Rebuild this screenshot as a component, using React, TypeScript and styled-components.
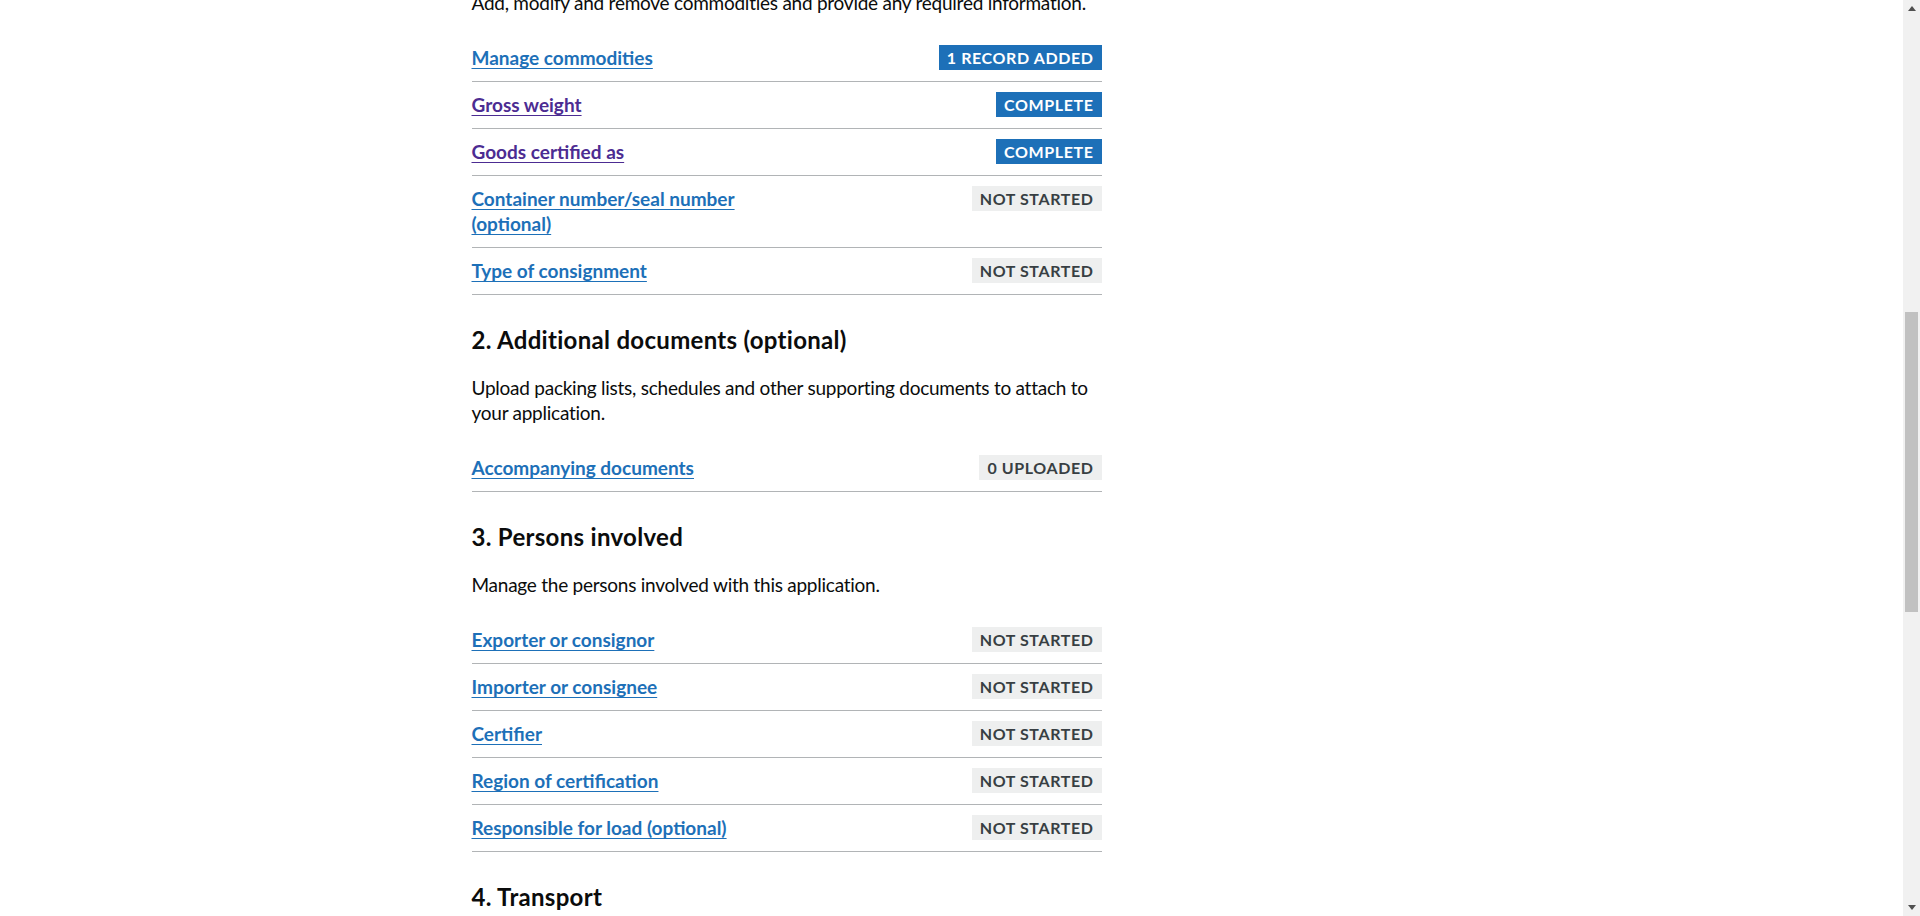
import styled, { createGlobalStyle } from 'styled-components';

const GlobalStyle = createGlobalStyle`
  html, body {
    margin: 0;
    padding: 0;
    height: 100%;
    overflow: hidden;
    background: #ffffff;
  }
  body {
    font-family: Lato, "Liberation Sans", Arial, sans-serif;
    color: #0b0c0c;
    -webkit-font-smoothing: antialiased;
  }
`;

const Screen = styled.div`
  display: flex;
  height: 100vh;
`;

const Viewport = styled.div`
  flex: 1;
  overflow: hidden;
`;

/* the page is scrolled down a little, so the first line sits partly above the fold */
const WidthContainer = styled.main`
  max-width: 960px;
  margin: -10px auto 0;
`;

const Column = styled.div`
  width: 630px;
`;

const Section = styled.section``;

const SectionHeading = styled.h2`
  margin: 0 0 20px;
  font-size: 24px;
  line-height: 30px;
  font-weight: 700;
  letter-spacing: 0.3px;
`;

const Body = styled.p`
  margin: 0 0 20px;
  font-size: 19px;
  line-height: 25px;
  letter-spacing: -0.25px;
`;

const TaskList = styled.ul`
  list-style: none;
  margin: 0 0 30px;
  padding: 0;
`;

const TaskItem = styled.li`
  display: flex;
  justify-content: space-between;
  align-items: flex-start;
  padding: 10px 0 11px;
  border-bottom: 1px solid #b1b4b6;
  font-size: 19px;
  line-height: 25px;
`;

const TaskLink = styled.a<{ $visited?: boolean }>`
  max-width: 50%;
  color: ${(p) => (p.$visited ? '#4c2c92' : '#1d70b8')};
  font-weight: 700;
  text-decoration: underline;
  text-decoration-thickness: 1px;
  text-underline-offset: 0.1578em;
`;

const Tag = styled.strong<{ $tone: 'blue' | 'grey' }>`
  flex-shrink: 0;
  display: inline-block;
  padding: 5px 8px 4px;
  font-size: 16px;
  line-height: 16px;
  font-weight: 700;
  letter-spacing: 0.6px;
  text-transform: uppercase;
  color: ${(p) => (p.$tone === 'blue' ? '#ffffff' : '#383f43')};
  background: ${(p) => (p.$tone === 'blue' ? '#1d70b8' : '#eeefef')};
`;

const Scrollbar = styled.div`
  width: 17px;
  flex-shrink: 0;
  display: flex;
  flex-direction: column;
  background: #f1f1f1;
`;

const ArrowButton = styled.div`
  height: 17px;
  display: flex;
  align-items: center;
  justify-content: center;
`;

const Track = styled.div`
  flex: 1;
  display: flex;
  justify-content: center;
`;

const Thumb = styled.div`
  width: 13px;
  height: 300px;
  margin-top: 295px;
  background: #c1c1c1;
`;

type Task = {
  name: string;
  status: string;
  tone: 'blue' | 'grey';
  visited?: boolean;
};

type SectionData = {
  heading?: string;
  description: string;
  tasks: Task[];
};

const sections: SectionData[] = [
  {
    description: 'Add, modify and remove commodities and provide any required information.',
    tasks: [
      { name: 'Manage commodities', status: '1 record added', tone: 'blue' },
      { name: 'Gross weight', status: 'Complete', tone: 'blue', visited: true },
      { name: 'Goods certified as', status: 'Complete', tone: 'blue', visited: true },
      { name: 'Container number/seal number (optional)', status: 'Not started', tone: 'grey' },
      { name: 'Type of consignment', status: 'Not started', tone: 'grey' },
    ],
  },
  {
    heading: '2. Additional documents (optional)',
    description:
      'Upload packing lists, schedules and other supporting documents to attach to your application.',
    tasks: [{ name: 'Accompanying documents', status: '0 uploaded', tone: 'grey' }],
  },
  {
    heading: '3. Persons involved',
    description: 'Manage the persons involved with this application.',
    tasks: [
      { name: 'Exporter or consignor', status: 'Not started', tone: 'grey' },
      { name: 'Importer or consignee', status: 'Not started', tone: 'grey' },
      { name: 'Certifier', status: 'Not started', tone: 'grey' },
      { name: 'Region of certification', status: 'Not started', tone: 'grey' },
      { name: 'Responsible for load (optional)', status: 'Not started', tone: 'grey' },
    ],
  },
];

const Arrow = ({ down }: { down?: boolean }) => (
  <svg width="8" height="5" viewBox="0 0 8 5">
    <path d={down ? 'M0 0h8L4 5z' : 'M0 5h8L4 0z'} fill="#505050" />
  </svg>
);

const App = () => {
  return (
    <>
      <GlobalStyle />
      <Screen>
        <Viewport>
          <WidthContainer>
            <Column>
              {sections.map((section, i) => (
                <Section key={i}>
                  {section.heading && <SectionHeading>{section.heading}</SectionHeading>}
                  <Body>{section.description}</Body>
                  <TaskList>
                    {section.tasks.map((task) => (
                      <TaskItem key={task.name}>
                        <TaskLink href="#" $visited={task.visited}>
                          {task.name}
                        </TaskLink>
                        <Tag $tone={task.tone}>{task.status}</Tag>
                      </TaskItem>
                    ))}
                  </TaskList>
                </Section>
              ))}
              <Section>
                <SectionHeading>4. Transport</SectionHeading>
              </Section>
            </Column>
          </WidthContainer>
        </Viewport>
        <Scrollbar>
          <ArrowButton>
            <Arrow />
          </ArrowButton>
          <Track>
            <Thumb />
          </Track>
          <ArrowButton>
            <Arrow down />
          </ArrowButton>
        </Scrollbar>
      </Screen>
    </>
  );
};

export default App;
